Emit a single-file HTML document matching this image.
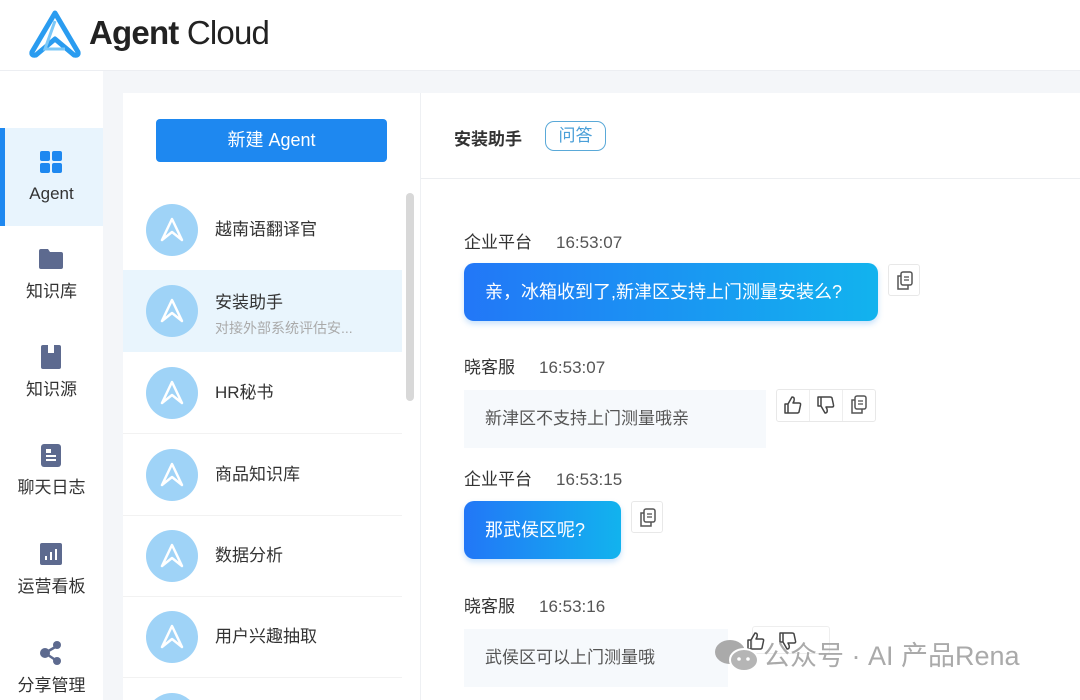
<!DOCTYPE html>
<html style="width:1080px;height:700px;overflow:hidden"><head><meta charset="utf-8"><style>
*{margin:0;padding:0;box-sizing:border-box}
html,body{width:1080px;height:700px;overflow:hidden}
body{background:#f4f6f9;font-family:"Liberation Sans","Noto Sans CJK SC",sans-serif;color:#333}
#wrap{position:relative;width:1080px;height:700px;overflow:hidden}
.abs{position:absolute}
.hdr{left:0;top:0;width:1080px;height:71px;background:#fff;border-bottom:1px solid #eceef2}
.nav{left:0;top:71px;width:103px;height:629px;background:#fff}
.ni{position:absolute;left:0;width:103px;text-align:center;font-size:17px;line-height:22px;color:#333}
.list{left:123px;top:93px;width:297px;height:607px;background:#fff}
.chat{left:420px;top:93px;width:660px;height:607px;background:#fff;border-left:1px solid #eef0f3;overflow:hidden}
.item{position:absolute;left:0;width:279px;height:82px}
.av{position:absolute;left:23px;top:15px;width:52px;height:52px;border-radius:50%;background:#9fd3f7}
.av svg{position:absolute;left:12px;top:12px}
.nm{position:absolute;left:92px;font-size:17px;color:#333}
.meta{position:absolute;font-size:17px;color:#333}
.meta span{margin-left:24px;color:#555}
.ub{position:absolute;height:58px;border-radius:10px;background:linear-gradient(90deg,#2277f7,#12b3ee);color:#fff;font-size:18px;line-height:58px;padding-left:21px;box-shadow:0 3px 6px rgba(40,140,240,.25)}
.bb{position:absolute;height:58px;background:#f6f9fc;color:#555;font-size:17px;line-height:58px;padding-left:21px}
.btn{position:absolute;width:32px;height:32px;border:1px solid #e8e8e8;border-radius:3px;background:#fff}
.btn svg{position:absolute;left:7px;top:6px}
</style></head><body><div id="wrap">
<div class="abs hdr">
<svg class="abs" style="left:28px;top:9px" width="54" height="50" viewBox="0 0 54 50"><path d="M27 4 L4 43 Q3 47 8 46 L27 30 L46 46 Q51 47 50 43 Z" fill="none" stroke="#2a9cf0" stroke-width="5" stroke-linejoin="round"/><path d="M27 12 L17 40 L37 40" fill="none" stroke="#7cc8f7" stroke-width="3"/></svg>
<div class="abs" style="left:89px;top:13px;font-size:33px;line-height:40px;color:#222;letter-spacing:-0.8px"><b>Agent</b> Cloud</div>
</div>
<div class="abs nav">
<div class="abs" style="left:0;top:57px;width:103px;height:98px;background:#e8f4fd"></div>
<div class="abs" style="left:0;top:57px;width:5px;height:98px;background:#1e88f0"></div>
</div>
<svg class="abs" style="left:40px;top:151px" width="22" height="22"><rect x="0" y="0" width="10" height="10" rx="2" fill="#1e88f0"/><rect x="12" y="0" width="10" height="10" rx="2" fill="#1e88f0"/><rect x="0" y="12" width="10" height="10" rx="2" fill="#1e88f0"/><rect x="12" y="12" width="10" height="10" rx="2" fill="#1e88f0"/></svg>
<div class="ni" style="top:183px">Agent</div>
<svg class="abs" style="left:39px;top:249px" width="24" height="20"><path d="M0 2 Q0 0 2 0 H9 L11 3 H22 Q24 3 24 5 V18 Q24 20 22 20 H2 Q0 20 0 18Z" fill="#5d6a8f"/></svg>
<div class="ni" style="top:281px">知识库</div>
<svg class="abs" style="left:41px;top:345px" width="20" height="24"><rect width="20" height="24" rx="2" fill="#5d6a8f"/><rect x="7" y="0" width="6" height="8" fill="#fff"/></svg>
<div class="ni" style="top:379px">知识源</div>
<svg class="abs" style="left:41px;top:444px" width="20" height="23"><rect width="20" height="23" rx="3" fill="#5d6a8f"/><rect x="5" y="5" width="5" height="4" fill="#fff"/><rect x="5" y="11" width="10" height="2" fill="#fff"/><rect x="5" y="15" width="10" height="2" fill="#fff"/></svg>
<div class="ni" style="top:477px">聊天日志</div>
<svg class="abs" style="left:40px;top:543px" width="22" height="22"><rect width="22" height="22" rx="2" fill="#5d6a8f"/><rect x="5" y="13" width="2" height="4" fill="#fff"/><rect x="10" y="9" width="2" height="8" fill="#fff"/><rect x="15" y="6" width="2" height="11" fill="#fff"/></svg>
<div class="ni" style="top:576px">运营看板</div>
<svg class="abs" style="left:39px;top:641px" width="24" height="24"><line x1="6" y1="12" x2="18" y2="5" stroke="#5d6a8f" stroke-width="2.5"/><line x1="6" y1="12" x2="18" y2="20" stroke="#5d6a8f" stroke-width="2.5"/><circle cx="6" cy="12" r="5" fill="#5d6a8f"/><circle cx="18" cy="4" r="4" fill="#5d6a8f"/><circle cx="18" cy="20" r="4" fill="#5d6a8f"/></svg>
<div class="ni" style="top:675px;height:25px;overflow:hidden">分享管理</div>

<div class="abs list">
<div class="abs" style="left:33px;top:26px;width:231px;height:43px;background:#1e88f0;border-radius:4px;color:#fff;font-size:18px;text-align:center;line-height:43px">新建 Agent</div>
<div class="abs" style="left:283px;top:100px;width:8px;height:208px;background:#d8d8d8;border-radius:4px"></div>
<div class="abs" style="left:0;top:177px;width:279px;height:82px;background:#e9f5fd"></div>
</div>
<div class="abs" style="left:123px;top:96px;width:279px;height:604px;overflow:hidden">
<div class="item" style="top:93px"><div class="av"><svg width="28" height="28" viewBox="0 0 28 28"><path d="M14 3 L4 24 L14 16 L24 24Z" fill="none" stroke="#fff" stroke-width="2.5" stroke-linejoin="round"/></svg></div><div class="nm" style="top:26px">越南语翻译官</div></div>
<div class="item" style="top:174px"><div class="av"><svg width="28" height="28" viewBox="0 0 28 28"><path d="M14 3 L4 24 L14 16 L24 24Z" fill="none" stroke="#fff" stroke-width="2.5" stroke-linejoin="round"/></svg></div><div class="nm" style="top:18px">安装助手</div><div class="nm" style="top:48px;font-size:14px;color:#aaa">对接外部系统评估安...</div></div>
<div class="item" style="top:256px;border-bottom:1px solid #f2f2f2"><div class="av"><svg width="28" height="28" viewBox="0 0 28 28"><path d="M14 3 L4 24 L14 16 L24 24Z" fill="none" stroke="#fff" stroke-width="2.5" stroke-linejoin="round"/></svg></div><div class="nm" style="top:26px">HR秘书</div></div>
<div class="item" style="top:338px;border-bottom:1px solid #f2f2f2"><div class="av"><svg width="28" height="28" viewBox="0 0 28 28"><path d="M14 3 L4 24 L14 16 L24 24Z" fill="none" stroke="#fff" stroke-width="2.5" stroke-linejoin="round"/></svg></div><div class="nm" style="top:26px">商品知识库</div></div>
<div class="item" style="top:419px;border-bottom:1px solid #f2f2f2"><div class="av"><svg width="28" height="28" viewBox="0 0 28 28"><path d="M14 3 L4 24 L14 16 L24 24Z" fill="none" stroke="#fff" stroke-width="2.5" stroke-linejoin="round"/></svg></div><div class="nm" style="top:26px">数据分析</div></div>
<div class="item" style="top:500px;border-bottom:1px solid #f2f2f2"><div class="av"><svg width="28" height="28" viewBox="0 0 28 28"><path d="M14 3 L4 24 L14 16 L24 24Z" fill="none" stroke="#fff" stroke-width="2.5" stroke-linejoin="round"/></svg></div><div class="nm" style="top:26px">用户兴趣抽取</div></div>
<div class="item" style="top:582px;height:22px;overflow:hidden"><div class="av"></div></div>
</div>

<div class="abs chat">
<div class="abs" style="left:0;top:0;width:660px;height:86px;border-bottom:1px solid #eceef1"></div>
<div class="abs" style="left:33px;top:32px;font-size:17px;font-weight:bold;color:#333">安装助手</div>
<div class="abs" style="left:124px;top:28px;width:61px;height:30px;border:1px solid #5aa9d8;border-radius:9px;color:#4a9fd8;font-size:17px;text-align:center;line-height:28px">问答</div>
<div class="meta" style="left:43px;top:135px">企业平台<span>16:53:07</span></div>
<div class="ub" style="left:43px;top:170px;width:414px">亲，冰箱收到了,新津区支持上门测量安装么?</div>
<div class="btn" style="left:467px;top:171px"><svg width="18" height="20"><rect x="5" y="1" width="11" height="13" rx="2" fill="none" stroke="#555" stroke-width="1.5"/><path d="M5 5 H2 V18 H12 V14" fill="none" stroke="#555" stroke-width="1.5"/><line x1="8" y1="6" x2="13" y2="6" stroke="#555" stroke-width="1.3"/><line x1="8" y1="9" x2="13" y2="9" stroke="#555" stroke-width="1.3"/></svg></div>
<div class="meta" style="left:43px;top:260px">晓客服<span>16:53:07</span></div>
<div class="bb" style="left:43px;top:297px;width:302px">新津区不支持上门测量哦亲</div>
<div class="abs" style="left:355px;top:296px;width:100px;height:33px;border:1px solid #e8e8e8;border-radius:3px;background:#fff"></div>
<div class="abs" style="left:388px;top:297px;width:1px;height:31px;background:#eee"></div>
<div class="abs" style="left:421px;top:297px;width:1px;height:31px;background:#eee"></div>
<svg class="abs" style="left:362px;top:302px" width="20" height="20" viewBox="0 0 20 20"><path d="M2 9 H5 V18 H2Z M5 9 L9 2 Q12 2 11 6 L10 8 H16 Q18 8 17.5 10 L16 17 Q15.5 18 14 18 H5" fill="none" stroke="#444" stroke-width="1.5" stroke-linejoin="round"/></svg>
<svg class="abs" style="left:395px;top:302px" width="20" height="20" viewBox="0 0 20 20"><g transform="translate(0,20) scale(1,-1)"><path d="M2 9 H5 V18 H2Z M5 9 L9 2 Q12 2 11 6 L10 8 H16 Q18 8 17.5 10 L16 17 Q15.5 18 14 18 H5" fill="none" stroke="#444" stroke-width="1.5" stroke-linejoin="round"/></g></svg>
<div class="abs" style="left:429px;top:302px"><svg width="18" height="20"><rect x="5" y="1" width="11" height="13" rx="2" fill="none" stroke="#555" stroke-width="1.5"/><path d="M5 5 H2 V18 H12 V14" fill="none" stroke="#555" stroke-width="1.5"/><line x1="8" y1="6" x2="13" y2="6" stroke="#555" stroke-width="1.3"/><line x1="8" y1="9" x2="13" y2="9" stroke="#555" stroke-width="1.3"/></svg></div>
<div class="meta" style="left:43px;top:372px">企业平台<span>16:53:15</span></div>
<div class="ub" style="left:43px;top:408px;width:157px">那武侯区呢?</div>
<div class="btn" style="left:210px;top:408px"><svg width="18" height="20"><rect x="5" y="1" width="11" height="13" rx="2" fill="none" stroke="#555" stroke-width="1.5"/><path d="M5 5 H2 V18 H12 V14" fill="none" stroke="#555" stroke-width="1.5"/><line x1="8" y1="6" x2="13" y2="6" stroke="#555" stroke-width="1.3"/><line x1="8" y1="9" x2="13" y2="9" stroke="#555" stroke-width="1.3"/></svg></div>
<div class="meta" style="left:43px;top:499px">晓客服<span>16:53:16</span></div>
<div class="bb" style="left:43px;top:536px;width:264px">武侯区可以上门测量哦</div>
<div class="abs" style="left:331px;top:533px;width:78px;height:28px;border:1px solid #eee;border-radius:3px;background:#fff"></div>
<svg class="abs" style="left:325px;top:538px" width="20" height="20" viewBox="0 0 20 20"><path d="M2 9 H5 V18 H2Z M5 9 L9 2 Q12 2 11 6 L10 8 H16 Q18 8 17.5 10 L16 17 Q15.5 18 14 18 H5" fill="none" stroke="#444" stroke-width="1.5" stroke-linejoin="round"/></svg>
<svg class="abs" style="left:357px;top:538px" width="20" height="20" viewBox="0 0 20 20"><g transform="translate(0,20) scale(1,-1)"><path d="M2 9 H5 V18 H2Z M5 9 L9 2 Q12 2 11 6 L10 8 H16 Q18 8 17.5 10 L16 17 Q15.5 18 14 18 H5" fill="none" stroke="#444" stroke-width="1.5" stroke-linejoin="round"/></g></svg>
<svg class="abs" style="left:292px;top:545px" width="48" height="36" viewBox="0 0 48 36"><ellipse cx="17" cy="14" rx="15" ry="12" fill="#aaa"/><ellipse cx="31" cy="22" rx="14" ry="11" fill="#b5b5b5" stroke="#fff" stroke-width="2"/><circle cx="26" cy="21" r="1.8" fill="#fff"/><circle cx="35" cy="21" r="1.8" fill="#fff"/></svg>
<div class="abs" style="left:342px;top:545px;font-size:27px;line-height:36px;color:#aaa;white-space:nowrap">公众号 · AI 产品Rena</div>
</div>
</div></body></html>
